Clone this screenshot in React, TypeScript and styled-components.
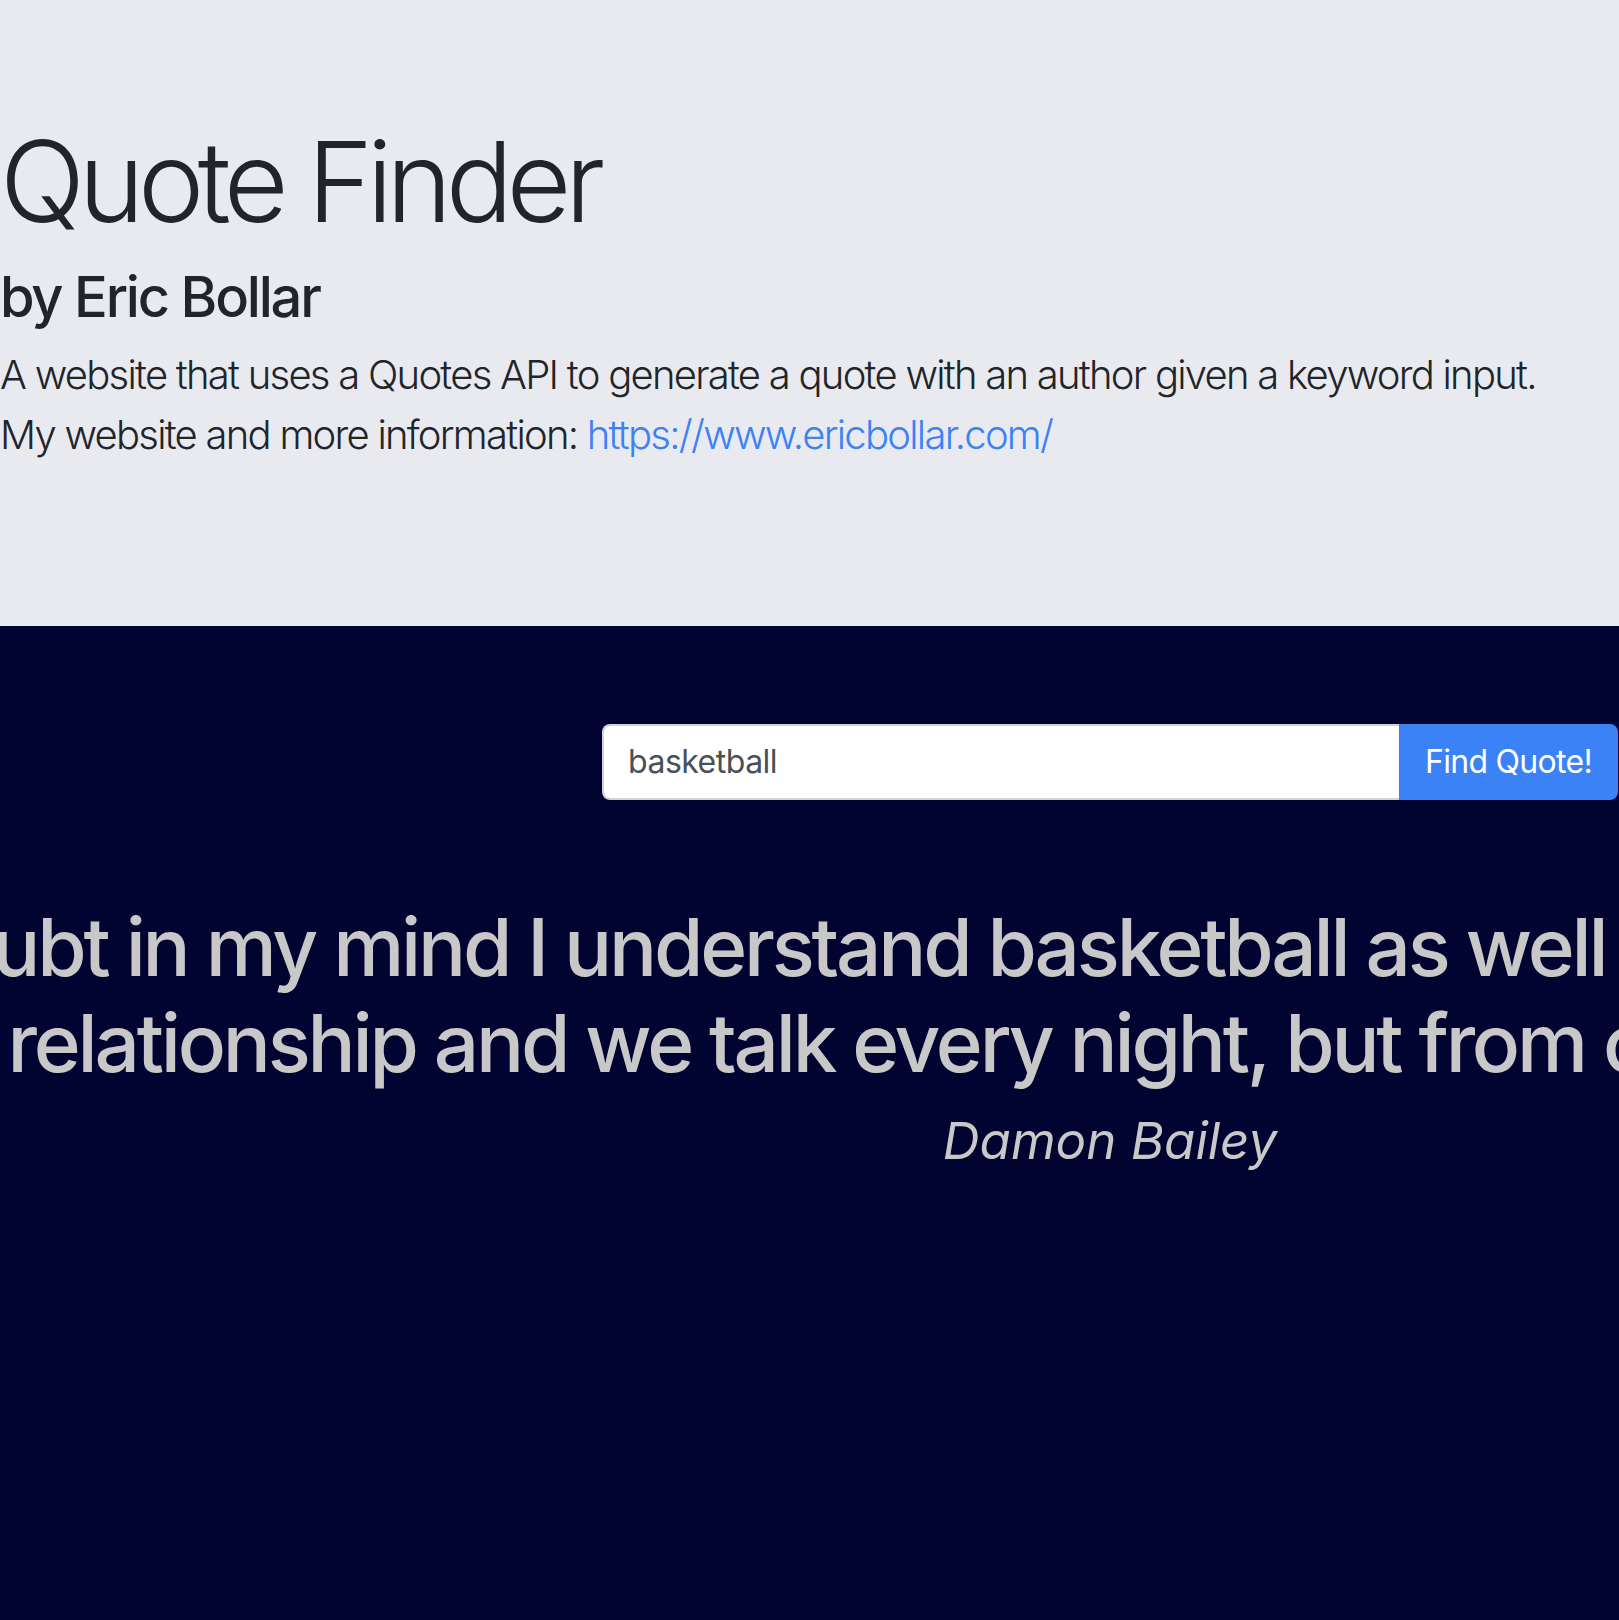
import React from "react";
import styled, { createGlobalStyle } from "styled-components";

const GlobalStyle = createGlobalStyle`
  html, body {
    margin: 0;
    padding: 0;
    overflow-x: hidden;
    background: #010330;
  }
  body {
    font-family: Inter, "Noto Sans", "Liberation Sans", sans-serif;
    color: #212529;
  }
  * { box-sizing: border-box; }
`;

const Page = styled.div`
  min-height: 100vh;
  display: flex;
  flex-direction: column;
`;

const Hero = styled.header`
  background: #e9eaef;
  padding: 114px 0 129px 0;
`;

const Title = styled.h1`
  margin: 0 0 16px 0;
  font-size: 112px;
  font-weight: 300;
  line-height: 1.2;
  letter-spacing: -6.5px;
  color: #212529;
`;

const Byline = styled.h3`
  margin: 0 0 13px 0;
  font-size: 56px;
  font-weight: 500;
  line-height: 1.2;
  letter-spacing: -2.2px;
  color: #212529;
`;

const Lead = styled.p`
  margin: 0 0 32px 0;
  font-size: 40px;
  font-weight: 300;
  line-height: 60px;
  letter-spacing: -1.75px;
  color: #212529;
`;

const LeadLine = styled.span`
  display: block;
  white-space: nowrap;
`;

const Link = styled.a`
  color: #3b82f6;
  text-decoration: none;
`;

const Stage = styled.main`
  flex: 1;
  background: #010330;
  display: flex;
  justify-content: flex-end;
  padding: 98px 1px 0 0;
`;

const Column = styled.section`
  width: 1016px;
  display: flex;
  flex-direction: column;
`;

const SearchGroup = styled.form`
  display: flex;
  margin: 0 0 99px 0;
`;

const SearchInput = styled.input`
  flex: 1;
  min-width: 0;
  height: 76px;
  padding: 12px 24px;
  font-family: inherit;
  font-size: 32px;
  line-height: 48px;
  letter-spacing: -0.5px;
  color: #495057;
  background: #ffffff;
  border: 2px solid #ced4da;
  border-right: none;
  border-radius: 8px 0 0 8px;
  outline: none;
`;

const SearchButton = styled.button`
  height: 76px;
  padding: 12px 24px;
  font-family: inherit;
  font-size: 32px;
  line-height: 48px;
  font-weight: 400;
  letter-spacing: -0.7px;
  color: #ffffff;
  background: #3b82f6;
  border: 2px solid #3b82f6;
  border-radius: 0 8px 8px 0;
  white-space: nowrap;
  cursor: pointer;
`;

const Quote = styled.blockquote`
  margin: 0 0 19px 0;
  display: flex;
  flex-direction: column;
  align-items: center;
`;

const QuoteLine = styled.span`
  display: block;
  white-space: nowrap;
  font-size: 80px;
  font-weight: 500;
  line-height: 96px;
  letter-spacing: -3.2px;
  color: #c8c8c8;
`;

const Author = styled.h4`
  margin: 0;
  text-align: center;
  font-size: 51px;
  font-weight: 400;
  font-style: italic;
  line-height: 1.2;
  letter-spacing: 0;
  color: #c8c8c8;
`;

export default function App() {
  return (
    <Page>
      <GlobalStyle />
      <Hero>
        <Title>Quote Finder</Title>
        <Byline>by Eric Bollar</Byline>
        <Lead>
          <LeadLine>
            A website that uses a Quotes API to generate a quote with an author given a keyword input.
          </LeadLine>
          <LeadLine>
            My website and more information:{" "}
            <Link href="https://www.ericbollar.com/">https://www.ericbollar.com/</Link>
          </LeadLine>
        </Lead>
      </Hero>
      <Stage>
        <Column>
          <SearchGroup onSubmit={(e) => e.preventDefault()}>
            <SearchInput type="text" defaultValue="basketball" />
            <SearchButton type="submit">Find Quote!</SearchButton>
          </SearchGroup>
          <Quote>
            <QuoteLine>There is no doubt in my mind I understand basketball as well as anybody in this whole world.</QuoteLine>
            <QuoteLine>I have a warm relationship and we talk every night, but from our conversations on the phone</QuoteLine>
          </Quote>
          <Author>Damon Bailey</Author>
        </Column>
      </Stage>
    </Page>
  );
}
